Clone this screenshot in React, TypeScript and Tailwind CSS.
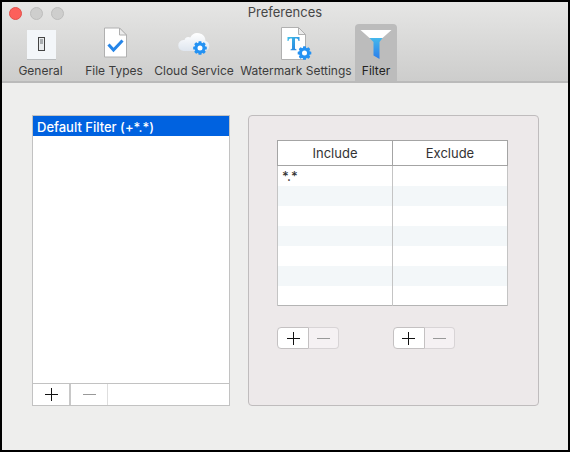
import { useState } from "react";

const ROWS = ["*.*", "", "", "", "", "", ""];

const GEAR_TEETH = [0, 45, 90, 135, 180, 225, 270, 315];

function Gear({ cx, cy }: { cx: number; cy: number }) {
  return (
    <g transform={`translate(${cx} ${cy})`}>
      {GEAR_TEETH.map((a) => (
        <rect key={a} x="-1.5" y="-6.8" width="3" height="4" rx="0.6" fill="#2492f3" transform={`rotate(${a})`} />
      ))}
      <circle r="4" fill="#fff" stroke="#2492f3" strokeWidth="3" />
    </g>
  );
}

function GeneralIcon() {
  return (
    <svg width="36" height="36" viewBox="0 0 36 36" aria-hidden="true">
      <rect x="4" y="5" width="29" height="29" fill="#b9bcbe" />
      <rect x="4" y="4" width="29" height="29" fill="#f3f6f9" />
      <rect x="15.5" y="11.5" width="6" height="13" fill="#e8ebed" stroke="#444" />
      <rect x="17" y="13" width="3" height="5" fill="#a9adb0" />
    </svg>
  );
}

function FileIcon() {
  return (
    <svg width="36" height="36" viewBox="0 0 36 36" aria-hidden="true">
      <path d="M8.500 2.500h15l7 7v22h-22z" fill="#fff" stroke="#b0b0b0" transform="translate(0 -0.500)" />
      <path d="M23.500 2v7h7z" fill="#ececec" stroke="#b0b0b0" />
      <path d="M12.500 18.500l5 5.500 9-9.500" fill="none" stroke="#2585e8" strokeWidth="3" />
    </svg>
  );
}

function CloudIcon() {
  return (
    <svg width="36" height="36" viewBox="0 0 36 36" aria-hidden="true">
      <defs>
        <linearGradient id="cloud" x1="0" y1="0" x2="0" y2="1">
          <stop offset="0" stopColor="#fff" />
          <stop offset="1" stopColor="#dfe6ef" />
        </linearGradient>
      </defs>
      <path d="M8 25a5.500 5.500 0 0 1-.500-11q.500 0 1 .1a4 4 0 0 1 5.800-2.600 8 8 0 0 1 15.200 3.500 5.200 5.200 0 0 1 0 10z" fill="url(#cloud)" />
      <Gear cx={24} cy={22} />
    </svg>
  );
}

function WatermarkIcon() {
  return (
    <svg width="36" height="36" viewBox="0 0 36 36" aria-hidden="true">
      <defs>
        <linearGradient id="mark" x1="0" y1="0" x2="1" y2="1">
          <stop offset="0" stopColor="#3fc0e8" />
          <stop offset="1" stopColor="#2379df" />
        </linearGradient>
      </defs>
      <path d="M3.500 1.500h17l7 7v25h-24z" fill="#fff" stroke="#b0b0b0" />
      <path d="M20.500 1.500v7h7z" fill="#ececec" stroke="#b0b0b0" />
      <path d="M9.500 11h12v4h-1c-.3-1.900-1-2.500-2.500-2.500h-1v9.500c0 1 .5 1.300 1.500 1.400v.8h-6v-.8c1-.1 1.500-.4 1.500-1.400v-9.500h-1c-1.500 0-2.200.6-2.500 2.500h-1z" fill="url(#mark)" />
      <Gear cx={26.5} cy={27} />
    </svg>
  );
}

function FilterIcon() {
  return (
    <svg width="36" height="36" viewBox="0 0 36 36" aria-hidden="true">
      <defs>
        <linearGradient id="funnel" x1="0" y1="0" x2="0" y2="1">
          <stop offset="0" stopColor="#45b8ec" />
          <stop offset="1" stopColor="#2a7eec" />
        </linearGradient>
      </defs>
      <path d="M2.500 4h31l-9 8h-13z" fill="#fff" />
      <path d="M11.500 12h13l-3 4v17l-6-3.500v-13.500z" fill="url(#funnel)" />
    </svg>
  );
}

const TABS = [
  { name: "General", icon: GeneralIcon, width: "w-[73px]" },
  { name: "File Types", icon: FileIcon, width: "w-[74px]" },
  { name: "Cloud Service", icon: CloudIcon, width: "w-[86px]" },
  { name: "Watermark Settings", icon: WatermarkIcon, width: "w-[118px]" },
  { name: "Filter", icon: FilterIcon, width: "w-[42px]" },
];

function Plus() {
  return (
    <svg width="13" height="13" viewBox="0 0 13 13" aria-hidden="true">
      <path d="M0 6.500h13M6.500 0v13" stroke="#111" />
    </svg>
  );
}

function Minus() {
  return (
    <svg width="13" height="13" viewBox="0 0 13 13" aria-hidden="true">
      <path d="M0 6.500h13" stroke="#999" />
    </svg>
  );
}

function AddRemove({ label }: { label: string }) {
  return (
    <div className="flex">
      <button
        aria-label={`Add ${label}`}
        className="flex h-[22px] w-8 items-center justify-center rounded-l border border-[#c4c1c2] bg-white"
      >
        <Plus />
      </button>
      <button
        aria-label={`Remove ${label}`}
        disabled
        className="flex h-[22px] w-[30px] items-center justify-center rounded-r border border-l-0 border-[#d8d4d6] bg-[#f5f1f3]"
      >
        <Minus />
      </button>
    </div>
  );
}

export default function App() {
  const [active, setActive] = useState("Filter");

  return (
    <div className="min-h-screen border-2 border-black bg-[#eeeeed] font-[Inter,sans-serif] text-[#333]">
      <header className="border-b-2 border-[#bababa] bg-linear-to-b from-[#e6e6e5] to-[#cdcdcc]">
        {/* Title bar */}
        <div className="relative flex h-[22px] items-center justify-center">
          <div className="absolute left-[7px] flex gap-2">
            <button aria-label="Close" className="size-[13px] rounded-full border border-[#e2504a] bg-[#fc605b]" />
            <button aria-label="Minimize" className="size-[13px] rounded-full border border-[#bdbdbc] bg-[#cececd]" />
            <button aria-label="Zoom" className="size-[13px] rounded-full border border-[#bdbdbc] bg-[#cececd]" />
          </div>
          <h1 className="text-[13px] text-[#474747]">Preferences</h1>
        </div>

        {/* Toolbar */}
        <nav className="flex pl-[2px]">
          {TABS.map(({ name, icon: Icon, width }) => (
            <button
              key={name}
              onClick={() => setActive(name)}
              className={`flex h-[57px] flex-col items-center rounded-t pt-[2px] text-[12px] whitespace-nowrap ${width} ${
                active === name ? "bg-[#bcbcbc] text-[#222]" : "text-[#3c3c3c]"
              }`}
            >
              <Icon />
              <span className="leading-[18px]">{name}</span>
            </button>
          ))}
        </nav>
      </header>

      <main className="grid grid-cols-[198fr_291fr] gap-[18px] pt-[32px] pr-[29px] pb-[43px] pl-[30px]">
        {/* Filter list */}
        <section className="flex flex-col border border-[#c2c2c2] bg-white">
          <ul className="flex-1">
            <li>
              <button className="block h-5 w-full bg-[#0062e0] px-1 text-left text-[13px] leading-[22px] font-medium text-white">
                Default Filter (+*.*)
              </button>
            </li>
          </ul>
          <div className="flex h-[22px] border-t border-[#c2c2c2]">
            <button aria-label="Add filter" className="flex w-[38px] items-center justify-center border-r-2 border-[#c8c8c8]">
              <Plus />
            </button>
            <button
              aria-label="Remove filter"
              disabled
              className="flex w-[37px] items-center justify-center border-r border-[#dedede]"
            >
              <Minus />
            </button>
          </div>
        </section>

        {/* Include / exclude patterns */}
        <section className="min-h-[291px] rounded border border-[#bfbcbd] bg-[#ede9ea] pt-6 pr-[30px] pl-7">
          <table className="w-full table-fixed border-collapse border border-[#b4b4b4] bg-white text-[13px]">
            <thead>
              <tr className="h-[25px]">
                <th className="border border-[#a4a4a4] leading-5 font-normal">Include</th>
                <th className="border border-[#a4a4a4] leading-5 font-normal">Exclude</th>
              </tr>
            </thead>
            <tbody>
              {ROWS.map((pattern, i) => (
                <tr key={i} className="h-5 even:bg-[#f3f7f9]">
                  <td className="border-x border-[#c4c4c4] px-1 leading-4 font-medium">{pattern}</td>
                  <td className="border-x border-[#c4c4c4]" />
                </tr>
              ))}
            </tbody>
          </table>
          <div className="grid grid-cols-2 pt-[21px]">
            <AddRemove label="include pattern" />
            <AddRemove label="exclude pattern" />
          </div>
        </section>
      </main>
    </div>
  );
}
